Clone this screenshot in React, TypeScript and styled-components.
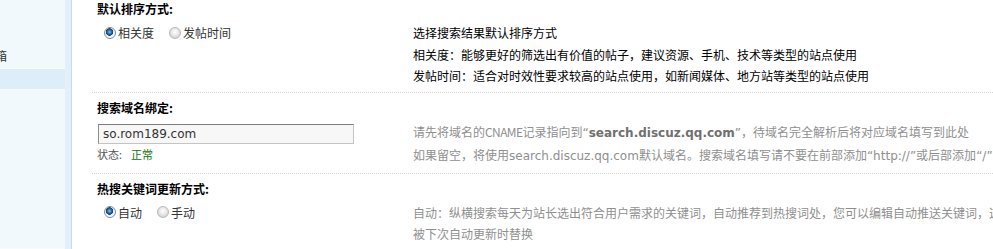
import React from 'react';
import styled, { createGlobalStyle } from 'styled-components';

const GlobalStyle = createGlobalStyle`
  html, body {
    margin: 0;
    padding: 0;
    background: #fff;
    overflow: hidden;
  }
  body {
    font-family: "Noto Sans CJK SC", "Liberation Sans", sans-serif;
    font-size: 12px;
    color: #333;
  }
`;

/* ── Shell ── */
const Page = styled.div`
  display: flex;
  width: 993px;
  height: 249px;
  overflow: hidden;
`;

const Sidebar = styled.div`
  display: flex;
  flex-shrink: 0;
  width: 72px;
`;

const SideList = styled.div`
  width: 65px;
  background: #f2f9fd;
  display: flex;
  flex-direction: column;
`;

const SideItem = styled.div<{ $active?: boolean; $h: number }>`
  height: ${p => p.$h}px;
  box-sizing: border-box;
  padding-bottom: 3px;
  background: ${p => (p.$active ? '#ddedf9' : '#f2f9fd')};
  border-bottom: 1px solid #f7fbfe;
  display: flex;
  align-items: flex-end;
  overflow: hidden;
  white-space: nowrap;
  font-size: 12px;
  line-height: 18px;
  color: #333;
  text-indent: -5px;
`;

const SideEdge = styled.div`
  width: 6px;
  background: #e3f0fa;
  border-right: 1px solid #c6dbeb;
`;

const Main = styled.div`
  flex: 1;
  min-width: 0;
  margin-left: 20px;
`;

/* ── Form table ── */
const HeadRow = styled.div<{ $first?: boolean }>`
  border-top: ${p => (p.$first ? 'none' : '1px dotted #d4d4d4')};
  padding: ${p => (p.$first ? '0' : '6px')} 0 0 5px;
  line-height: 18px;
  font-size: 12px;
  font-weight: 700;
  color: #000;
`;

const Row = styled.div`
  display: grid;
  grid-template-columns: 316px 1fr;
`;

const Cell = styled.div`
  padding: 4px 0 5px 5px;
  min-width: 0;
`;

const Tips = styled.div<{ $dark?: boolean }>`
  padding: 4px 0 5px 5px;
  font-size: 12px;
  line-height: 21.5px;
  color: ${p => (p.$dark ? '#000' : '#8f8f8f')};
  white-space: nowrap;
  overflow: hidden;
`;

const Latin = styled.span<{ $bold?: boolean }>`
  font-family: "DejaVu Sans", Verdana, sans-serif;
  font-size: 12px;
  font-weight: ${p => (p.$bold ? 700 : 400)};
  color: ${p => (p.$bold ? '#707070' : '#8f8f8f')};
`;

const Narrow = styled.span`
  letter-spacing: -0.6px;
`;

const RadioGroup = styled.div`
  display: flex;
  align-items: center;
  padding-left: 7px;
  height: 21.5px;
`;

const RadioLabel = styled.label`
  display: flex;
  align-items: center;
  gap: 2px;
  margin-right: 15px;
  font-size: 12px;
  color: #333;
`;

const RadioDot = styled.span<{ $checked?: boolean }>`
  width: 12px;
  height: 12px;
  border-radius: 50%;
  box-sizing: border-box;
  border: 1px solid ${p => (p.$checked ? '#7c8b98' : '#b9b9b9')};
  background: ${p =>
    p.$checked
      ? 'radial-gradient(circle at 45% 40%, #8fc3ea 0, #2a6fa8 2px, #123f6b 3.5px, #e9eef2 4px, #ffffff 6px)'
      : 'radial-gradient(circle at 50% 40%, #ffffff 0, #ececec 3px, #d2d2d2 6px)'};
  flex-shrink: 0;
`;

const TextInput = styled.input`
  display: block;
  box-sizing: border-box;
  width: 256px;
  height: 20px;
  margin: 3px 0 0 1px;
  padding: 0 4px;
  border: 1px solid #c4c4c4;
  border-top-color: #7d7d7d;
  border-left-color: #8e8e8e;
  background: #f7f7f7;
  font-family: "DejaVu Sans", Verdana, sans-serif;
  font-size: 12px;
  color: #333;
  outline: none;
`;

const Status = styled.div`
  margin-top: 1px;
  line-height: 18px;
  font-size: 11px;
  color: #555;
`;

const StatusValue = styled.span`
  margin-left: 9px;
  color: #0a760a;
`;

export default function App() {
  return (
    <>
      <GlobalStyle />
      <Page>
        <Sidebar>
          <SideList>
            <SideItem $h={69}>箱</SideItem>
            <SideItem $h={21} $active />
            <SideItem $h={160} />
          </SideList>
          <SideEdge />
        </Sidebar>

        <Main>
          <HeadRow $first>默认排序方式:</HeadRow>
          <Row>
            <Cell>
              <RadioGroup>
                <RadioLabel><RadioDot $checked />相关度</RadioLabel>
                <RadioLabel><RadioDot />发帖时间</RadioLabel>
              </RadioGroup>
            </Cell>
            <Tips $dark>
              选择搜索结果默认排序方式<br />
              相关度：能够更好的筛选出有价值的帖子，建议资源、手机、技术等类型的站点使用<br />
              发帖时间：适合对时效性要求较高的站点使用，如新闻媒体、地方站等类型的站点使用
            </Tips>
          </Row>

          <HeadRow>搜索域名绑定:</HeadRow>
          <Row>
            <Cell>
              <TextInput defaultValue="so.rom189.com" />
              <Status>
                状态:<StatusValue>正常</StatusValue>
              </Status>
            </Cell>
            <Tips>
              请先将域名的<Narrow>CNAME</Narrow>记录指向到<Latin>“</Latin><Latin $bold>search.discuz.qq.com</Latin><Latin>”</Latin>，待域名完全解析后将对应域名填写到此处<br />
              如果留空，将使用<Latin>search.discuz.qq.com</Latin>默认域名。搜索域名填写请不要在前部添加<Latin>“http://”</Latin>或后部添加<Latin>“/”</Latin>
            </Tips>
          </Row>

          <HeadRow>热搜关键词更新方式:</HeadRow>
          <Row>
            <Cell>
              <RadioGroup>
                <RadioLabel><RadioDot $checked />自动</RadioLabel>
                <RadioLabel><RadioDot />手动</RadioLabel>
              </RadioGroup>
            </Cell>
            <Tips>
              自动：纵横搜索每天为站长选出符合用户需求的关键词，自动推荐到热搜词处，您可以编辑自动推送关键词，这些关键词会<br />
              被下次自动更新时替换<br />
              手动：所有推荐词由人工设置，如需保持热搜词的新鲜、准确，建议使用自动更新
            </Tips>
          </Row>
        </Main>
      </Page>
    </>
  );
}
